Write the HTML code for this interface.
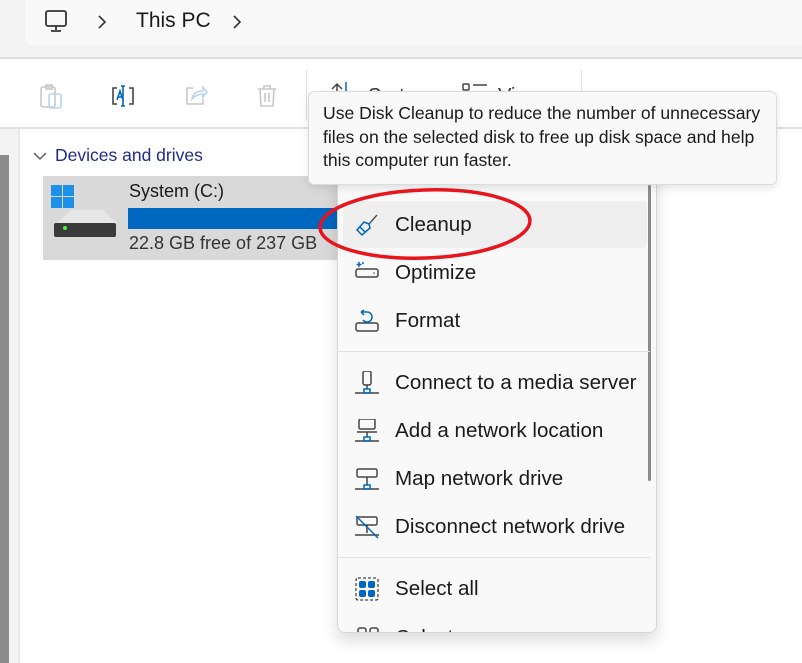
<!DOCTYPE html>
<html><head><meta charset="utf-8"><style>
*{margin:0;padding:0;box-sizing:border-box}
body{width:802px;height:663px;overflow:hidden;background:#fff;font-family:"Segoe UI","Liberation Sans",sans-serif;position:relative;color:#1a1a1a}
.abs{position:absolute}
.item{position:absolute;left:337px;width:312px;height:46px;font-size:20.6px;line-height:46px}
.item span{position:absolute;left:58px;white-space:nowrap}
.item svg{position:absolute;left:18px;top:11px}
</style></head><body>
<div class="abs" style="left:0;top:0;width:802px;height:58px;background:#f3f3f3"></div>
<div class="abs" style="left:25px;top:-8px;width:790px;height:53px;background:#f9f9f9;border-radius:7px"></div>
<svg class="abs" style="left:44px;top:10px" width="26" height="24" viewBox="0 0 26 24" fill="none" stroke="#333" stroke-width="1.8"><rect x="2" y="1" width="20" height="15" rx="2"/><path d="M12 16v4M7 21h10"/></svg>
<svg class="abs" style="left:97px;top:15px" width="10" height="14" viewBox="0 0 10 14" fill="none" stroke="#333" stroke-width="1.6"><path d="M2 1l6 6-6 6"/></svg>
<div class="abs" style="left:136px;top:9px;font-size:21px;color:#1a1a1a">This PC</div>
<svg class="abs" style="left:232px;top:15px" width="10" height="14" viewBox="0 0 10 14" fill="none" stroke="#333" stroke-width="1.6"><path d="M2 1l6 6-6 6"/></svg>
<div class="abs" style="left:0;top:57px;width:802px;height:2px;background:#dcdcdc"></div>
<div class="abs" style="left:0;top:127px;width:802px;height:2px;background:#e0e0e0"></div>
<div class="abs" style="left:306px;top:70px;width:1px;height:50px;background:#e0e0e0"></div>
<div class="abs" style="left:581px;top:70px;width:1px;height:50px;background:#e0e0e0"></div>
<svg class="abs" style="left:330px;top:82px" width="20" height="14" viewBox="0 0 20 14" fill="none" stroke="#444" stroke-width="1.5"><path d="M7 14V2M2 7l5-5 5 5"/><path d="M16 0v14" stroke="#0067c0"/></svg>
<div class="abs" style="left:368px;top:85px;font-size:20px;color:#333">Sort</div>
<svg class="abs" style="left:462px;top:83px" width="26" height="10" viewBox="0 0 26 10" fill="none" stroke="#444" stroke-width="1.5"><rect x="1" y="1" width="6" height="6" rx="1"/><path d="M11 2h14"/></svg>
<div class="abs" style="left:498px;top:85px;font-size:20px;color:#333">View</div>
<svg class="abs" style="left:38px;top:84px" width="26" height="26" viewBox="0 0 26 26" fill="none" stroke="#c8c8c8" stroke-width="1.6"><rect x="3" y="3" width="14" height="20" rx="2"/><rect x="8" y="1" width="6" height="4"/><rect x="11" y="10" width="12" height="14" rx="2" stroke="#b8d4ee"/></svg>
<svg class="abs" style="left:110px;top:84px" width="26" height="24" viewBox="0 0 26 24" fill="none" stroke-width="1.6"><path d="M7 4H3v16h4M19 4h4v16h-4" stroke="#444"/><path d="M13 2v20M11 2h4M11 22h4" stroke="#0067c0"/><path d="M7 16l3-9 3 9M8 13h4" stroke="#0067c0"/></svg>
<svg class="abs" style="left:183px;top:84px" width="26" height="24" viewBox="0 0 26 24" fill="none" stroke="#c8c8c8" stroke-width="1.6"><path d="M10 4H4v16h16v-5"/><path d="M9 15c1-6 5-8 11-8V3l4 5-4 5V10c-5 0-8 2-11 5z" stroke="#b8d4ee"/></svg>
<svg class="abs" style="left:256px;top:84px" width="22" height="24" viewBox="0 0 22 24" fill="none" stroke="#c8c8c8" stroke-width="1.6"><path d="M2 5h18M8 5V2h6v3M4 5l1 17h12l1-17M9 9v9M13 9v9"/></svg>
<div class="abs" style="left:0;top:129px;width:18px;height:534px;background:#f3f3f3"></div>
<div class="abs" style="left:0;top:155px;width:9px;height:508px;background:#8c8c8c"></div>
<div class="abs" style="left:18px;top:129px;width:2px;height:534px;background:#e8e8e8"></div>
<svg class="abs" style="left:33px;top:151px" width="14" height="10" viewBox="0 0 14 10" fill="none" stroke="#555" stroke-width="1.4"><path d="M1 2l6 6 6-6"/></svg>
<div class="abs" style="left:55px;top:145px;font-size:17.5px;color:#1e2b8c">Devices and drives</div>
<div class="abs" style="left:43px;top:176px;width:300px;height:84px;background:#d9d9d9"></div>
<svg class="abs" style="left:51px;top:183px" width="68" height="56" viewBox="0 0 68 56"><rect x="0" y="2" width="11" height="11" fill="#1e90e8"/><rect x="12" y="2" width="11" height="11" fill="#1e90e8"/><rect x="0" y="14" width="11" height="11" fill="#1e90e8"/><rect x="12" y="14" width="11" height="11" fill="#1e90e8"/><path d="M6 40l14-13h32l14 13z" fill="#e6e6e6"/><rect x="3" y="40" width="62" height="14" rx="2" fill="#3a3a3a"/><circle cx="14" cy="45" r="2" fill="#3f3"/></svg>
<div class="abs" style="left:129px;top:181px;font-size:18px">System (C:)</div>
<div class="abs" style="left:128px;top:208px;width:215px;height:21px;background:#0067c0"></div>
<div class="abs" style="left:129px;top:233px;font-size:18px;color:#333">22.8 GB free of 237 GB</div>
<div class="abs" style="left:337px;top:150px;width:320px;height:483px;background:#f9f9f9;border:1px solid #d6d6d6;border-radius:8px;box-shadow:0 8px 16px rgba(0,0,0,.14)"></div>
<div class="abs" style="left:343px;top:201px;width:304px;height:47px;background:#efefef;border-radius:4px"></div>
<div class="abs" style="left:648px;top:185px;width:3px;height:296px;background:#8a8a8a;border-radius:2px"></div>
<div class="abs" style="left:338px;top:351px;width:312px;height:1px;background:#e2e2e2"></div>
<div class="abs" style="left:338px;top:557px;width:312px;height:1px;background:#e2e2e2"></div>
<div class="item" style="top:202px"><svg width="24" height="24" viewBox="0 0 24 24" fill="none" stroke-width="1.5"><path d="M22 2l-8 9" stroke="#555"/><path d="M14 11l-5-2-7 8 5 5 8-7z" stroke="#0067c0"/><path d="M5 14l5 5" stroke="#0067c0"/></svg><span>Cleanup</span></div>
<div class="item" style="top:250px"><svg width="24" height="24" viewBox="0 0 24 24" fill="none" stroke-width="1.5"><rect x="1" y="8" width="22" height="8" rx="2" stroke="#444"/><circle cx="19" cy="12" r=".8" fill="#444" stroke="none"/><path d="M4 1v5M1.5 3.5h5M8 1v2" stroke="#0067c0"/></svg><span>Optimize</span></div>
<div class="item" style="top:298px"><svg width="24" height="24" viewBox="0 0 24 24" fill="none" stroke-width="1.5"><rect x="1" y="14" width="22" height="8" rx="2" stroke="#444"/><path d="M6 3h6a5 5 0 1 1-4 8M6 3l3-2M6 3l3 3" stroke="#0067c0"/></svg><span>Format</span></div>
<div class="item" style="top:360px"><svg width="24" height="24" viewBox="0 0 24 24" fill="none" stroke-width="1.5"><rect x="8" y="0" width="8" height="14" rx="2" stroke="#444"/><path d="M12 14v4M0 22h24" stroke="#444"/><rect x="9" y="18" width="6" height="4" stroke="#0067c0"/></svg><span>Connect to a media server</span></div>
<div class="item" style="top:408px"><svg width="24" height="24" viewBox="0 0 24 24" fill="none" stroke-width="1.5"><rect x="4" y="0" width="16" height="10" rx="1.5" stroke="#444"/><path d="M2 13h20M12 13v5M0 22h24" stroke="#444"/><rect x="9" y="18" width="6" height="4" stroke="#0067c0"/></svg><span>Add a network location</span></div>
<div class="item" style="top:456px"><svg width="24" height="24" viewBox="0 0 24 24" fill="none" stroke-width="1.5"><rect x="2" y="2" width="20" height="8" rx="1.5" stroke="#444"/><path d="M12 10v8M0 22h24" stroke="#444"/><rect x="9" y="18" width="6" height="4" stroke="#0067c0"/></svg><span>Map network drive</span></div>
<div class="item" style="top:504px"><svg width="24" height="24" viewBox="0 0 24 24" fill="none" stroke-width="1.5"><rect x="2" y="2" width="20" height="8" rx="1.5" stroke="#444"/><path d="M12 10v8M0 20h24" stroke="#444"/><path d="M1 1l22 22" stroke="#0067c0"/></svg><span>Disconnect network drive</span></div>
<div class="item" style="top:566px"><svg width="24" height="24" viewBox="0 0 24 24" fill="none"><rect x="1" y="1" width="22" height="22" rx="2" stroke="#444" stroke-width="1.3" stroke-dasharray="3 2"/><rect x="4" y="4" width="7" height="7" rx="2" fill="#0067c0"/><rect x="13" y="4" width="7" height="7" rx="2" fill="#0067c0"/><rect x="4" y="13" width="7" height="7" rx="2" fill="#0067c0"/><rect x="13" y="13" width="7" height="7" rx="2" fill="#0067c0"/></svg><span>Select all</span></div>
<div class="abs" style="left:338px;top:624px;width:310px;height:8px;overflow:hidden;border-radius:0 0 8px 8px"><svg class="abs" style="left:18px;top:2px" width="24" height="24" viewBox="0 0 24 24" fill="none" stroke="#444" stroke-width="1.5"><rect x="2" y="2" width="8" height="8" rx="2"/><rect x="14" y="2" width="8" height="8" rx="2"/></svg><div class="abs" style="left:58px;top:2px;font-size:20.6px">Select none</div></div>
<div class="abs" style="left:308px;top:91px;width:469px;height:94px;background:#f9f9f9;border:1px solid #dcdcdc;border-radius:6px;box-shadow:0 3px 8px rgba(0,0,0,.1);padding:10px 0 0 14px;font-size:17.6px;line-height:23.5px;color:#1a1a1a;white-space:nowrap">Use Disk Cleanup to reduce the number of unnecessary<br>files on the selected disk to free up disk space and help<br>this computer run faster.</div>
<svg class="abs" style="left:0;top:0" width="802" height="663"><ellipse cx="425" cy="224" rx="105" ry="34" fill="none" stroke="#e8141e" stroke-width="3.5" transform="rotate(-2 425 224)"/></svg>
</body></html>
